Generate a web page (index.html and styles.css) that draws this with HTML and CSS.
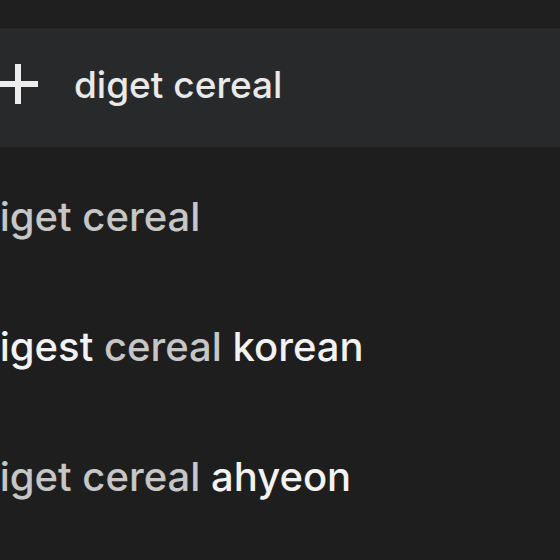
FILE: index.html
```html
<!DOCTYPE html>
<html>
<head>
<meta charset="utf-8">
<link rel="stylesheet" href="styles.css">
</head>
<body>
<div class="page">
  <div class="top"></div>
  <div class="search">
    <svg class="plus" width="40" height="40" viewBox="0 0 40 40"><path d="M20 0V40M0 20H40" stroke="#ececec" stroke-width="6"/></svg>
    <span class="query">diget cereal</span>
  </div>
  <ul class="list">
    <li class="row"><span class="m">diget cereal</span></li>
    <li class="row"><span class="s">digest</span> <span class="m">cereal</span> <span class="s">korean</span></li>
    <li class="row"><span class="m">diget cereal</span> <span class="s">ahyeon</span></li>
  </ul>
</div>
</body>
</html>
```
FILE: styles.css
```css
html, body { margin: 0; padding: 0; background: #1e1e1e; }
body { width: 560px; height: 560px; overflow: hidden; font-family: Inter, "Noto Sans", sans-serif; }
.page { display: flex; flex-direction: column; }
.top { height: 27px; background: #1f1f1f; border-bottom: 1px solid #1a1a1a; }
.search { height: 119px; box-sizing: border-box; padding-bottom: 8px; background: #28292b; display: flex; align-items: center; gap: 36px; margin-left: -2px; }
.plus { flex: none; }
.query { color: #e9e9e9; font-size: 37px; font-weight: 500; position: relative; top: 1px; }
.list { list-style: none; margin: 0; padding: 0; margin-left: -25px; }
.row { height: 130px; line-height: 130px; font-size: 40px; font-weight: 500; white-space: nowrap; }
.row:first-child { margin-top: 5px; }
.m { color: #c6c6c6; }
.s { color: #f2f2f2; }
```
